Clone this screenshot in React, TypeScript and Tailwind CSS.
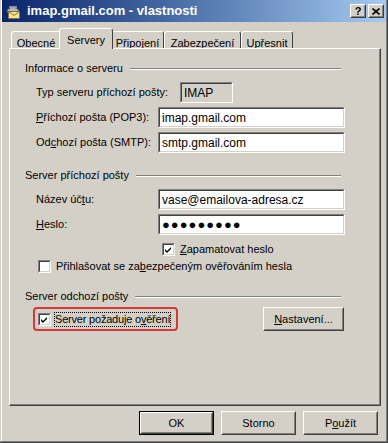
import React from "react";

const FONT = "font-['Liberation_Sans',Arial,sans-serif]";

function Sunken({ className, children }: { className?: string; children?: React.ReactNode }) {
  return (
    <div className={`border border-t-[#808080] border-l-[#808080] border-r-white border-b-white ${className ?? ""}`}>
      <div className="h-full w-full border border-t-[#404040] border-l-[#404040] border-r-[#d4d0c8] border-b-[#d4d0c8] flex items-center">
        {children}
      </div>
    </div>
  );
}

function Field({ value }: { value: string }) {
  return (
    <Sunken className="w-[187px] h-[21px] bg-white">
      <span className="pl-[2px] text-[12px]">{value}</span>
    </Sunken>
  );
}

function Checkbox({ checked }: { checked: boolean }) {
  return (
    <Sunken className="w-[13px] h-[13px] bg-white shrink-0">
      {checked && (
        <svg width="9" height="9" viewBox="0 0 9 9" className="block">
          <path d="M1 4 L3 6 L7 2 L7 4 L3 8 L1 6 Z" fill="#000" />
        </svg>
      )}
    </Sunken>
  );
}

function Raised({ className, children, def }: { className?: string; children?: React.ReactNode; def?: boolean }) {
  const inner = (
    <div className="h-full w-full border border-t-white border-l-white border-r-[#404040] border-b-[#404040]">
      <div className="h-full w-full border border-t-[#d4d0c8] border-l-[#d4d0c8] border-r-[#808080] border-b-[#808080] flex items-center justify-center">
        {children}
      </div>
    </div>
  );
  if (def) {
    return <div className={`border border-black ${className ?? ""}`}>{inner}</div>;
  }
  return <div className={className}>{inner}</div>;
}

function GroupHeader({ title }: { title: string }) {
  return (
    <div className="flex items-center h-[13px] w-[316px]">
      <span className="whitespace-nowrap">{title}</span>
      <div className="ml-[7px] flex-1 h-0 border-t border-t-[#808080] border-b border-b-white" />
    </div>
  );
}

function Row({ label, children }: { label: React.ReactNode; children: React.ReactNode }) {
  return (
    <div className="flex items-center h-[21px]">
      <div className="w-[133px] pl-[11px] whitespace-nowrap">{label}</div>
      {children}
    </div>
  );
}

function Tab({ label, w, active }: { label: string; w: string; active?: boolean }) {
  if (active) {
    return (
      <div className={`${w} h-[21px] -mx-[2px] -mb-px relative z-10 bg-[#d4d0c8] border-t border-l border-t-white border-l-white border-r border-r-[#404040] rounded-t-[3px] flex justify-center pt-[3px]`}>
        {label}
      </div>
    );
  }
  return (
    <div className={`${w} h-[17px] bg-[#d4d0c8] border-t border-l border-t-white border-l-white border-r border-r-[#404040] rounded-t-[3px] flex justify-center pt-[3px]`}>
      {label}
    </div>
  );
}

function MailIcon() {
  return (
    <svg width="16" height="16" viewBox="0 0 16 16">
      <path d="M2 9 C2 3 14 3 14 9 Z" fill="#b8b8b8" stroke="#606060" strokeWidth="1" />
      <path d="M4 4 L12 4" stroke="#e8e8e8" strokeWidth="1" />
      <rect x="3.5" y="8.5" width="11" height="7" fill="#f8e88c" stroke="#807040" strokeWidth="1" />
      <path d="M3.5 8.5 L9 12.5 L14.5 8.5" fill="none" stroke="#807040" strokeWidth="1" />
    </svg>
  );
}

export default function App() {
  return (
    <div className={`w-[388px] h-[443px] bg-[#d4d0c8] text-[11px] text-black ${FONT} border-r border-b border-r-[#404040] border-b-[#404040]`}>
      <div className="h-full border-l border-l-[#d4d0c8] border-r border-r-[#808080] border-b border-b-[#808080] flex flex-col">
        <div className="h-full border-l border-l-white flex flex-col">
          {/* Title bar */}
          <div className="h-[22px] bg-gradient-to-r from-[#0a246a] to-[#a6caf0] flex items-center pl-[3px] pr-[2px]">
            <MailIcon />
            <span className="ml-[6px] text-white font-bold text-[13px]">imap.gmail.com - vlastnosti</span>
            <div className="ml-auto flex gap-[2px]">
              <Raised className="w-[16px] h-[14px] bg-[#d4d0c8]">
                <span className="font-bold text-[11px] leading-none">?</span>
              </Raised>
              <Raised className="w-[16px] h-[14px] bg-[#d4d0c8]">
                <svg width="8" height="7" viewBox="0 0 8 7">
                  <path d="M0.5 0.5 L7.5 6.5 M7.5 0.5 L0.5 6.5" stroke="#000" strokeWidth="1.6" />
                </svg>
              </Raised>
            </div>
          </div>

          {/* Tabs */}
          <div className="mt-[6px] pl-[9px] flex items-end h-[20px]">
            <Tab label="Obecné" w="w-[50px]" />
            <Tab label="Servery" w="w-[54px]" active />
            <Tab label="Připojení" w="w-[53px]" />
            <Tab label="Zabezpečení" w="w-[77px]" />
            <Tab label="Upřesnit" w="w-[52px]" />
          </div>

          {/* Panel */}
          <div className="ml-[7px] w-[372px] h-[358px] border border-t-white border-l-white border-r-[#404040] border-b-[#404040]">
            <div className="h-full border-r border-b border-r-[#808080] border-b-[#808080] pl-[15px] pt-[13px]">
              <GroupHeader title="Informace o serveru" />
              <div className="mt-[7px] flex flex-col gap-[4px]">
                <div className="flex items-center h-[21px]">
                  <div className="pl-[11px] whitespace-nowrap w-[155px]">Typ serveru příchozí pošty:</div>
                  <Sunken className="w-[53px] h-[21px]">
                    <span className="pl-[2px] text-[12px]">IMAP</span>
                  </Sunken>
                </div>
                <Row label={<><u>P</u>říchozí pošta (POP3):</>}>
                  <Field value="imap.gmail.com" />
                </Row>
                <Row label={<>Od<u>c</u>hozí pošta (SMTP):</>}>
                  <Field value="smtp.gmail.com" />
                </Row>
              </div>

              <div className="mt-[16px]">
                <GroupHeader title="Server příchozí pošty" />
              </div>
              <div className="mt-[7px] flex flex-col gap-[4px]">
                <Row label={<>Název úč<u>t</u>u:</>}>
                  <Field value="vase@emailova-adresa.cz" />
                </Row>
                <Row label={<><u>H</u>eslo:</>}>
                  <Sunken className="w-[187px] h-[21px] bg-white">
                    <span className="pl-[2px] text-[13px] tracking-[1px] leading-none">●●●●●●●●●</span>
                  </Sunken>
                </Row>
              </div>
              <div className="mt-[8px] pl-[137px] flex items-center gap-[5px] h-[13px]">
                <Checkbox checked />
                <span><u>Z</u>apamatovat heslo</span>
              </div>
              <div className="mt-[4px] pl-[13px] flex items-center gap-[5px] h-[13px]">
                <Checkbox checked={false} />
                <span className="whitespace-nowrap">Přihlašovat se za<u>b</u>ezpečeným ověřováním hesla</span>
              </div>

              <div className="mt-[17px]">
                <GroupHeader title="Server odchozí pošty" />
              </div>
              <div className="mt-[4px] flex items-center w-[319px] h-[24px]">
                <div className="ml-[8px] w-[145px] h-[24px] border-2 border-[#d23b3b] rounded-[4px] flex items-center pl-[3px] gap-[3px]">
                  <Checkbox checked />
                  <span className="border border-dotted border-black leading-[13px] whitespace-nowrap tracking-[-0.2px]">Server požaduje o<u>v</u>ěření</span>
                </div>
                <Raised className="ml-auto w-[81px] h-[24px]">
                  <span><u>N</u>astavení...</span>
                </Raised>
              </div>
            </div>
          </div>

          {/* Buttons */}
          <div className="mt-[5px] flex justify-end gap-[7px] pr-[8px]">
            <Raised def className="w-[75px] h-[24px]">
              <span>OK</span>
            </Raised>
            <Raised className="w-[75px] h-[24px]">
              <span>Storno</span>
            </Raised>
            <Raised className="w-[75px] h-[24px]">
              <span>P<u>o</u>užít</span>
            </Raised>
          </div>
        </div>
      </div>
    </div>
  );
}
